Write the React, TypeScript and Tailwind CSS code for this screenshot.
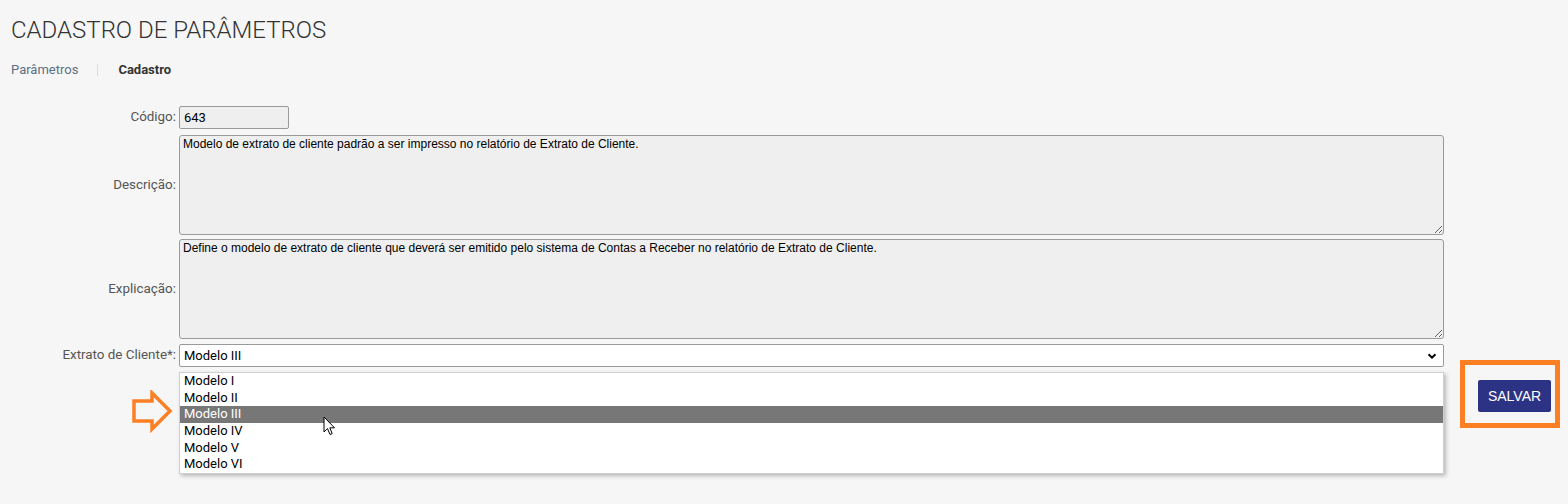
import React from "react";

const opcoes = ["Modelo I", "Modelo II", "Modelo III", "Modelo IV", "Modelo V", "Modelo VI"];

function Label({ children }: { children: React.ReactNode }) {
  return (
    <div className="w-[179px] shrink-0 text-right text-[13.4px] text-[#555] pr-[3px]">
      {children}
    </div>
  );
}

export default function App() {
  const selecionado = "Modelo III";

  return (
    <div className="relative min-h-[504px] w-full bg-[#f6f6f6] font-['Roboto',sans-serif] text-[#333]">
      <div className="px-[11px] pt-[15px]">
        <h1 className="text-[24px] font-light leading-[30px] text-[#333]">
          CADASTRO DE PARÂMETROS
        </h1>
        <div className="mt-[16px] flex items-center text-[13px] leading-[18px]">
          <span className="text-[#5d7184]">Parâmetros</span>
          <span className="ml-[19px] mr-[20px] h-[12px] w-px bg-[#ddd]"></span>
          <span className="font-bold text-[#333]">Cadastro</span>
        </div>
      </div>

      <div className="mt-[27px] flex items-start">
        {/* formulário */}
        <div className="flex w-[1444px] flex-col">
          <div className="flex items-center">
            <Label>Código:</Label>
            <div className="flex h-[23px] w-[110px] items-center rounded-[2px] border border-[#9a9a9a] bg-[#efefef] px-[4px] text-[13px] text-black">
              643
            </div>
          </div>

          <div className="mt-[6px] flex items-center">
            <Label>Descrição:</Label>
            <textarea
              readOnly
              defaultValue="Modelo de extrato de cliente padrão a ser impresso no relatório de Extrato de Cliente."
              className="h-[100px] w-[1265px] rounded-[3px] border border-[#9a9a9a] bg-[#efefef] px-[3px] py-[1px] font-['Liberation_Sans',Arial,sans-serif] text-[12px] leading-[14px] text-black outline-none"
            />
          </div>

          <div className="mt-[4px] flex items-center">
            <Label>Explicação:</Label>
            <textarea
              readOnly
              defaultValue="Define o modelo de extrato de cliente que deverá ser emitido pelo sistema de Contas a Receber no relatório de Extrato de Cliente."
              className="h-[100px] w-[1265px] rounded-[3px] border border-[#9a9a9a] bg-[#efefef] px-[3px] py-[1px] font-['Liberation_Sans',Arial,sans-serif] text-[12px] leading-[14px] text-black outline-none"
            />
          </div>

          <div className="mt-[5px] flex items-center">
            <Label>Extrato de Cliente*:</Label>
            <div className="relative w-[1265px]">
              <div className="flex h-[23px] items-center justify-between rounded-[2px] border border-[#9a9a9a] bg-white pl-[4px] pr-[6px] text-[13px] text-black">
                <span>{selecionado}</span>
                <svg className="h-[10px] w-[10px]" viewBox="0 0 10 10">
                  <path d="M1.5 3.2 L5 6.6 L8.5 3.2" fill="none" stroke="#000" strokeWidth="2" />
                </svg>
              </div>

              {/* lista aberta */}
              <ul className="absolute left-0 top-[28px] z-10 w-full border border-[#cfcfcf] bg-white py-0 text-[13px] text-black shadow-[2px_2px_4px_rgba(0,0,0,0.25)]">
                {opcoes.map((o) => (
                  <li
                    key={o}
                    className={`flex h-[16.6px] items-center px-[4px] leading-[16px] ${
                      o === selecionado ? "bg-[#777] text-white" : ""
                    }`}
                  >
                    {o}
                  </li>
                ))}
              </ul>
            </div>
          </div>
        </div>

        {/* botão com destaque */}
        <div className="ml-[16px] mt-[254px] flex h-[68px] w-[100px] items-start border-[5px] border-[#fd7f23] pl-[13px] pt-[15px]">
          <button className="h-[32px] w-[73px] rounded-[2px] bg-[#2d3384] font-['Liberation_Sans',Arial,sans-serif] text-[14px] text-white">
            SALVAR
          </button>
        </div>
      </div>

      {/* seta laranja */}
      <svg className="absolute left-[131px] top-[390px] z-20" width="44" height="44" viewBox="0 0 44 44">
        <path
          d="M3 11 H21 V3 L39 21 L21 39 V31 H3 Z"
          fill="none"
          stroke="#fd7f23"
          strokeWidth="3.5"
          strokeLinejoin="miter"
        />
      </svg>

      {/* cursor */}
      <svg className="absolute left-[323px] top-[416px] z-20" width="14" height="21" viewBox="0 0 14 21">
        <path
          d="M1 1 L1 16 L4.5 12.6 L7 18.5 L9.2 17.6 L6.8 11.8 L11.5 11.8 Z"
          fill="#fff"
          stroke="#000"
          strokeWidth="1"
          strokeLinejoin="miter"
        />
      </svg>
    </div>
  );
}
